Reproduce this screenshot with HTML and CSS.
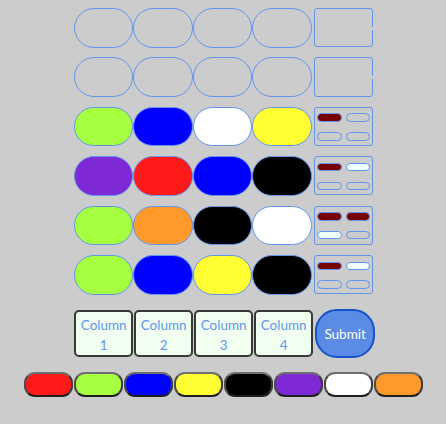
FILE: index.html
```html
<!DOCTYPE html>
<html>
<head>
<meta charset="utf-8">
<link rel="stylesheet" href="styles.css">
</head>
<body>
<div class="board">
  <div class="row">
    <div class="oval"></div><div class="oval"></div><div class="oval"></div><div class="oval"></div>
    <div class="hints empty"></div>
  </div>
  <div class="row">
    <div class="oval"></div><div class="oval"></div><div class="oval"></div><div class="oval"></div>
    <div class="hints empty"></div>
  </div>
  <div class="row">
    <div class="oval green"></div><div class="oval blue"></div><div class="oval white"></div><div class="oval yellow"></div>
    <div class="hints"><span class="peg hit"></span><span class="peg"></span><span class="peg"></span><span class="peg"></span></div>
  </div>
  <div class="row">
    <div class="oval purple"></div><div class="oval red"></div><div class="oval blue"></div><div class="oval black"></div>
    <div class="hints"><span class="peg hit"></span><span class="peg near"></span><span class="peg"></span><span class="peg"></span></div>
  </div>
  <div class="row">
    <div class="oval green"></div><div class="oval orange"></div><div class="oval black"></div><div class="oval white"></div>
    <div class="hints"><span class="peg hit"></span><span class="peg hit"></span><span class="peg near"></span><span class="peg"></span></div>
  </div>
  <div class="row">
    <div class="oval green"></div><div class="oval blue"></div><div class="oval yellow"></div><div class="oval black"></div>
    <div class="hints"><span class="peg hit"></span><span class="peg near"></span><span class="peg"></span><span class="peg"></span></div>
  </div>
  <div class="controls">
    <button class="col-btn">Column<br>1</button>
    <button class="col-btn">Column<br>2</button>
    <button class="col-btn">Column<br>3</button>
    <button class="col-btn">Column<br>4</button>
    <button class="submit">Submit</button>
  </div>
</div>
<div class="palette">
  <div class="chip red"></div>
  <div class="chip green"></div>
  <div class="chip blue"></div>
  <div class="chip yellow"></div>
  <div class="chip black"></div>
  <div class="chip purple"></div>
  <div class="chip white"></div>
  <div class="chip orange"></div>
</div>
</body>
</html>
```
FILE: styles.css
```css
html, body {
  margin: 0;
  padding: 0;
  background: #cccccc;
  font-family: "Lato", "DejaVu Sans", sans-serif;
}
body {
  width: 446px;
  height: 424px;
  overflow: hidden;
}
.board {
  padding: 8px 0 0 74px;
}
.row {
  display: flex;
  height: 39.6px;
  margin-bottom: 9.8px;
}
.oval {
  box-sizing: border-box;
  width: 59.4px;
  height: 39.6px;
  border: 1px solid #6495ed;
  border-radius: 20px;
}
.hints {
  position: relative;
  box-sizing: border-box;
  width: 58.8px;
  height: 39.2px;
  margin-left: 2.6px;
  border: 1px solid #6495ed;
  border-radius: 3px;
  padding: 5.6px 2px 0 2.3px;
  display: grid;
  grid-template-columns: 24.4px 24.4px;
  grid-auto-rows: 8.4px;
  column-gap: 4px;
  row-gap: 10.4px;
}
.hints.empty::after {
  content: "";
  position: absolute;
  right: -1px;
  top: 18px;
  width: 1px;
  height: 3px;
  background: #cccccc;
}
.peg {
  box-sizing: border-box;
  border: 1px solid #6495ed;
  border-radius: 5px;
}
.peg.hit { background: #770000; }
.peg.near { background: #f0ffff; }

.green { background: #a6ff40; }
.blue { background: #0000ff; }
.white { background: #ffffff; }
.yellow { background: #ffff33; }
.purple { background: #7f28d6; }
.red { background: #ff1a1a; }
.black { background: #000000; }
.orange { background: #ff9a2a; }

.controls {
  display: flex;
  align-items: flex-start;
  margin-top: 14.8px;
}
.col-btn {
  box-sizing: border-box;
  width: 59.4px;
  height: 47px;
  margin: 1px 0.6px 0 0;
  padding: 3px 0 0 0;
  border: 2px solid #383838;
  border-radius: 5px;
  background: #f0fff0;
  color: #6495ed;
  font-family: "Lato", "DejaVu Sans", sans-serif;
  font-size: 13.5px;
  line-height: 20px;
  text-align: center;
}
.submit {
  box-sizing: border-box;
  width: 60px;
  height: 49px;
  margin-left: 1.2px;
  padding: 0;
  border: 2px solid #1552c8;
  border-radius: 22px;
  background: #5b8be4;
  color: #ffffff;
  font-family: "Lato", "DejaVu Sans", sans-serif;
  font-size: 13.5px;
  text-align: center;
}
.palette {
  display: flex;
  gap: 1px;
  padding: 14px 0 0 24px;
}
.chip {
  box-sizing: border-box;
  width: 49px;
  height: 25px;
  border: 2px solid;
  border-color: #6e6e6e #3c3c3c #1e1e1e #4a4a4a;
  border-radius: 11px;
}
```
